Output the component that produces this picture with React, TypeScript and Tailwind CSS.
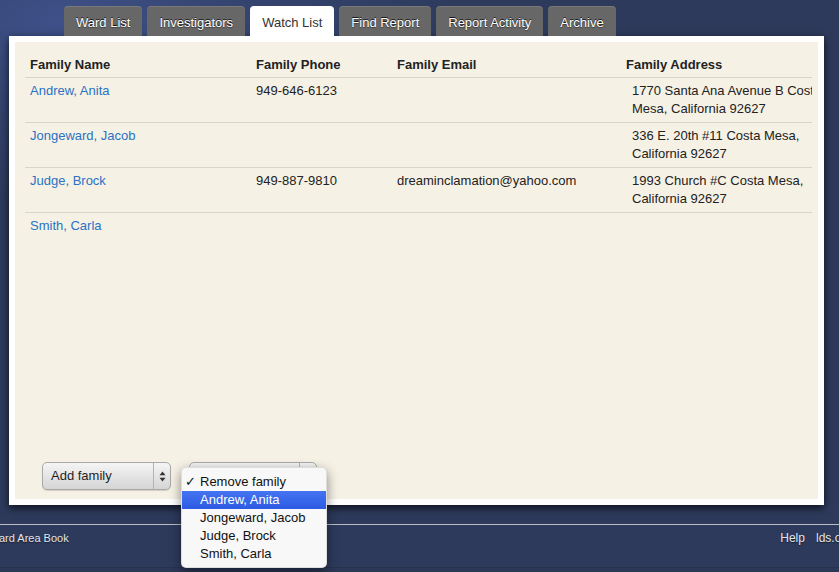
import React from "react";

const tabs = ["Ward List", "Investigators", "Watch List", "Find Report", "Report Activity", "Archive"];

const rows = [
  { name: "Andrew, Anita", phone: "949-646-6123", email: "", address: "1770 Santa Ana Avenue B Costa Mesa, California 92627" },
  { name: "Jongeward, Jacob", phone: "", email: "", address: "336 E. 20th #11 Costa Mesa, California 92627" },
  { name: "Judge, Brock", phone: "949-887-9810", email: "dreaminclamation@yahoo.com", address: "1993 Church #C Costa Mesa, California 92627" },
  { name: "Smith, Carla", phone: "", email: "", address: "" },
];

function Arrows() {
  return (
    <svg width="7" height="11" viewBox="0 0 7 11">
      <path d="M3.5 0.5 L6.5 4.3 L0.5 4.3 Z" fill="#333" />
      <path d="M3.5 10.5 L6.5 6.7 L0.5 6.7 Z" fill="#333" />
    </svg>
  );
}

function Select({ label, width }: { label: string; width: string }) {
  return (
    <div
      className={`${width} h-[28px] flex items-stretch rounded-[5px] border border-[#a9a9a9] bg-gradient-to-b from-[#f5f5f5] to-[#d5d5d5] shadow-[0_1px_1px_rgba(0,0,0,0.15)]`}
    >
      <div className="flex-1 flex items-center pl-[8px] text-[13px] text-[#1e1e1e]">{label}</div>
      <div className="w-[17px] border-l border-[#b3b3b3] flex items-center justify-center">
        <Arrows />
      </div>
    </div>
  );
}

export default function App() {
  return (
    <div
      className="relative w-[839px] h-[572px] overflow-hidden bg-[#2d3a5b] bg-[radial-gradient(ellipse_420px_180px_at_60px_20px,#3e5088_0%,#34446f_45%,#2d3a5b_100%)]"
      style={{ fontFamily: '"Liberation Sans", Arial, sans-serif' }}
    >
      {/* Tabs */}
      <div className="flex gap-[5px] pl-[64px] pt-[6px] h-[36px]">
        {tabs.map((t) =>
          t === "Watch List" ? (
            <div
              key={t}
              className="h-[30px] px-[12px] pt-[3px] flex items-center rounded-t-[4px] bg-white text-[13px] text-[#333]"
            >
              {t}
            </div>
          ) : (
            <div
              key={t}
              className="h-[30px] px-[12px] pt-[3px] flex items-center rounded-t-[4px] bg-[#676767] text-[13px] text-white [text-shadow:0_-1px_0_rgba(0,0,0,0.75),0_1px_1px_rgba(0,0,0,0.4)] shadow-[inset_0_1px_0_rgba(255,255,255,0.12)]"
            >
              {t}
            </div>
          )
        )}
      </div>

      {/* Panel */}
      <div className="ml-[9px] w-[815px] h-[469px] bg-white p-[6px] shadow-[0_3px_8px_rgba(0,0,0,0.7)]">
        <div className="h-full bg-[#f6f1e5] flex flex-col">
          <div className="ml-[10px] mt-[11px] w-[787px] overflow-hidden">
            <table className="table-fixed border-collapse w-[822px] text-[13px] leading-[18px]">
              <colgroup>
                <col className="w-[226px]" />
                <col className="w-[141px]" />
                <col className="w-[229px]" />
                <col className="w-[226px]" />
              </colgroup>
              <thead>
                <tr className="border-b border-[#d9d5cc]">
                  <th className="text-left font-bold text-[#222] pl-[5px] pt-[3px] pb-[3px]">Family Name</th>
                  <th className="text-left font-bold text-[#222] pl-[5px] pt-[3px] pb-[3px]">Family Phone</th>
                  <th className="text-left font-bold text-[#222] pl-[5px] pt-[3px] pb-[3px]">Family Email</th>
                  <th className="text-left font-bold text-[#222] pl-[5px] pt-[3px] pb-[3px]">Family Address</th>
                </tr>
              </thead>
              <tbody>
                {rows.map((r, i) => (
                  <tr key={r.name} className={i < rows.length - 1 ? "border-b border-[#d9d5cc] h-[45px]" : "h-[45px]"}>
                    <td className="align-top pl-[5px] pt-[4px] pb-[4px] text-[#2a72c4]">{r.name}</td>
                    <td className="align-top pl-[5px] pt-[4px] pb-[4px] text-[#222]">{r.phone}</td>
                    <td className="align-top pl-[5px] pt-[4px] pb-[4px] text-[#222]">{r.email}</td>
                    <td className="align-top pl-[11px] pr-[5px] pt-[4px] pb-[4px] text-[#222]">{r.address}</td>
                  </tr>
                ))}
              </tbody>
            </table>
          </div>

          <div className="mt-auto flex gap-[18px] pl-[27px] pb-[9px]">
            <Select label="Add family" width="w-[129px]" />
            <Select label="" width="w-[128px]" />
          </div>
        </div>
      </div>

      {/* Footer */}
      <div className="mt-[19px] border-t border-[#b9bdc8]">
        <div className="h-[42px] flex justify-between pt-[6px] text-[#e4e6ec] [text-shadow:0_1px_1px_rgba(0,0,0,0.5)]">
          <div className="ml-[-11px] text-[11px] leading-[14px]">Ward Area Book</div>
          <div className="flex gap-[11px] text-[12px] leading-[14px] mr-[-13px]">
            <span>Help</span>
            <span>lds.org</span>
          </div>
        </div>
        <div className="border-t border-[#27324f] h-[10px] bg-[#2c3858]" />
      </div>

      {/* Dropdown menu */}
      <div className="absolute left-[181px] top-[467px] w-[146px] rounded-[5px] bg-[#f8f8f8] shadow-[0_4px_12px_rgba(0,0,0,0.45)] border border-[rgba(0,0,0,0.1)] pt-[5px] pb-[4px] text-[13px] leading-[18px] text-[#111]">
        <div className="relative h-[18px] pl-[18px]">
          <span className="absolute left-[3px] top-0">✓</span>
          Remove family
        </div>
        <div className="h-[18px] pl-[18px] bg-gradient-to-b from-[#4474f0] to-[#2c5be3] text-white">Andrew, Anita</div>
        <div className="h-[18px] pl-[18px]">Jongeward, Jacob</div>
        <div className="h-[18px] pl-[18px]">Judge, Brock</div>
        <div className="h-[18px] pl-[18px]">Smith, Carla</div>
      </div>
    </div>
  );
}
